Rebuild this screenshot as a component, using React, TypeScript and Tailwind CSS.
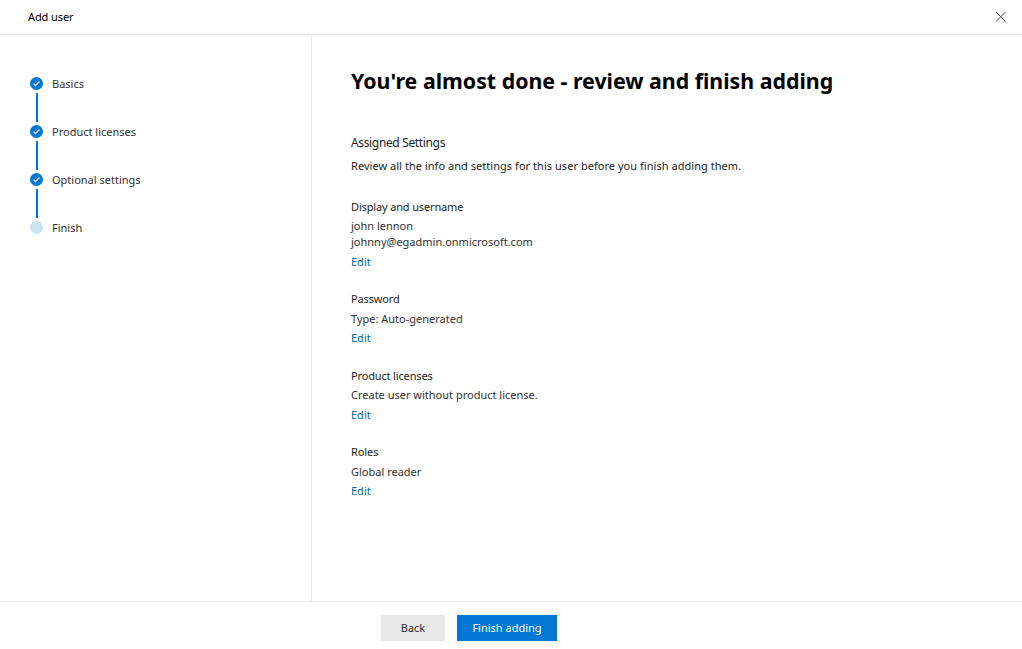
import React from "react";

function Check() {
  return (
    <div className="w-[13px] h-[13px] rounded-full bg-[#0078d4] flex items-center justify-center shrink-0">
      <svg width="9" height="9" viewBox="0 0 9 9" fill="none">
        <path d="M1.6 4.7 L3.6 6.5 L7.4 2.5" stroke="#fff" strokeWidth="1.2" />
      </svg>
    </div>
  );
}

function Step({ label, done, line }: { label: string; done: boolean; line: boolean }) {
  return (
    <div className="flex flex-col">
      <div className="flex items-start gap-[9px] h-[13px]">
        {done ? <Check /> : <div className="w-[13px] h-[13px] rounded-full bg-[#cce4f6] shrink-0" />}
        <span className="text-[11px] leading-[14px] text-[#323130]">{label}</span>
      </div>
      {line && <div className="w-[2px] h-[29px] my-[3px] ml-[6px] bg-[#0078d4]" />}
    </div>
  );
}

function Section({
  title,
  lines,
  className,
  tight,
}: {
  title: string;
  lines: string[];
  className: string;
  tight?: boolean;
}) {
  return (
    <div className={className}>
      <div className="text-[11px] leading-[16px] text-[#201f1e] tracking-[-0.15px]">{title}</div>
      <div className={`${tight ? "mt-[4px]" : "mt-[3px]"} text-[11px] leading-[16px] text-[#323130]`}>
        {lines.map((l) => (
          <div key={l}>{l}</div>
        ))}
      </div>
      <a className={`block ${tight ? "mt-[3px]" : "mt-[4px]"} text-[11px] leading-[16px] text-[#0067b8]`}>Edit</a>
    </div>
  );
}

export default function App() {
  return (
    <div className="w-[1022px] h-[649px] bg-white flex flex-col overflow-hidden font-['Noto_Sans',sans-serif]">
      <header className="h-[35px] shrink-0 border-b border-[#e8e8e8] flex items-center justify-between pl-[28px] pr-[15px]">
        <span className="text-[11px] text-black tracking-[-0.1px]">Add user</span>
        <svg className="-mt-[1px]" width="12" height="12" viewBox="0 0 12 12" fill="none">
          <path d="M1 1 L10.5 10.5 M10.5 1 L1 10.5" stroke="#5c3d5e" strokeWidth="1" />
        </svg>
      </header>
      <div className="flex-1 flex min-h-0">
        <aside className="w-[312px] shrink-0 border-r border-[#e8e8e8] pl-[30px] pt-[42px]">
          <Step label="Basics" done line />
          <Step label="Product licenses" done line />
          <Step label="Optional settings" done line />
          <Step label="Finish" done={false} line={false} />
        </aside>
        <main className="flex-1 pl-[39px] pt-[30px]">
          <h1 className="text-[21.33px] leading-[32px] font-bold text-black">You're almost done - review and finish adding</h1>
          <h2 className="mt-[37px] text-[12px] leading-[18px] text-[#201f1e] tracking-[-0.35px]">Assigned Settings</h2>
          <p className="mt-[6px] text-[11px] leading-[16px] text-[#201f1e] tracking-[0.04px]">
            Review all the info and settings for this user before you finish adding them.
          </p>
          <Section className="mt-[25px]" title="Display and username" lines={["john lennon", "johnny@egadmin.onmicrosoft.com"]} />
          <Section className="mt-[21px]" title="Password" lines={["Type: Auto-generated"]} tight />
          <Section className="mt-[22px]" title="Product licenses" lines={["Create user without product license."]} />
          <Section className="mt-[21px]" title="Roles" lines={["Global reader"]} tight />
        </main>
      </div>
      <footer className="h-[48px] shrink-0 border-t border-[#e8e8e8] pl-[381px] pt-[13px] flex items-start gap-[12px]">
        <button className="w-[64px] h-[26px] bg-[#e8e8e8] text-[11px] text-[#323130]">Back</button>
        <button className="w-[100px] h-[26px] bg-[#0078d4] text-[11px] text-white">Finish adding</button>
      </footer>
    </div>
  );
}
